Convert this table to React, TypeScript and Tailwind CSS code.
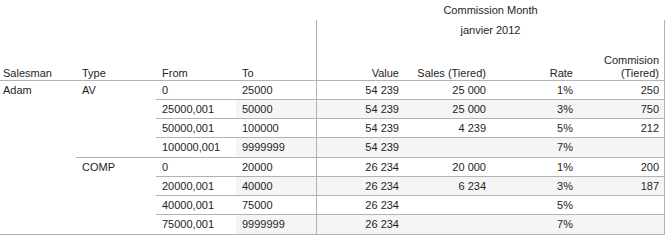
type Row = [string, string, string, string, string, string]

const groups: { type: string; rows: Row[] }[] = [
  {
    type: 'AV',
    rows: [
      ['0', '25000', '54 239', '25 000', '1%', '250'],
      ['25000,001', '50000', '54 239', '25 000', '3%', '750'],
      ['50000,001', '100000', '54 239', '4 239', '5%', '212'],
      ['100000,001', '9999999', '54 239', '', '7%', ''],
    ],
  },
  {
    type: 'COMP',
    rows: [
      ['0', '20000', '26 234', '20 000', '1%', '200'],
      ['20000,001', '40000', '26 234', '6 234', '3%', '187'],
      ['40000,001', '75000', '26 234', '', '5%', ''],
      ['75000,001', '9999999', '26 234', '', '7%', ''],
    ],
  },
]

function DataRow({ row, striped }: { row: Row; striped: boolean }) {
  const [from, to, value, sales, rate, comm] = row
  const bg = striped ? 'bg-[#f5f5f5]' : 'bg-white'
  return (
    <div className="flex h-[19px] leading-[19px]">
      <div className="w-[80px] pl-[6px] bg-white">{from}</div>
      <div className={`w-[80px] pl-[6px] ${bg}`}>{to}</div>
      <div className={`flex border-x border-[#b3b3b3] ${bg}`}>
        <div className="w-[87px] pr-[5px] text-right">{value}</div>
        <div className="w-[87px] pr-[5px] text-right">{sales}</div>
        <div className="w-[87px] pr-[5px] text-right">{rate}</div>
        <div className="w-[86px] pr-[5px] text-right">{comm}</div>
      </div>
    </div>
  )
}

export default function App() {
  return (
    <div
      className="w-[668px] h-[242px] bg-white text-[11px] text-[#1e1e1e] overflow-hidden"
      style={{ fontFamily: '"Liberation Sans", Arial, sans-serif' }}
    >
      <div className="w-[665px]">
        {/* header */}
        <div className="flex h-[81px] border-b border-[#b3b3b3]">
          <div className="w-[316px] flex items-end leading-[13px]">
            <div className="w-[76px] pl-[3px]">Salesman</div>
            <div className="w-[80px] pl-[6px]">Type</div>
            <div className="w-[80px] pl-[6px]">From</div>
            <div className="w-[80px] pl-[6px]">To</div>
          </div>
          <div className="w-[349px] flex flex-col">
            <div className="h-[20px] leading-[21px] text-center">Commission Month</div>
            <div className="flex-1 flex flex-col border-x border-[#b3b3b3]">
              <div className="h-[20px] leading-[21px] text-center">janvier 2012</div>
              <div className="flex-1 flex items-end leading-[13px]">
                <div className="w-[87px] pr-[5px] text-right">Value</div>
                <div className="w-[87px] pr-[5px] text-right">Sales (Tiered)</div>
                <div className="w-[87px] pr-[5px] text-right">Rate</div>
                <div className="w-[86px] pr-[5px] text-right">
                  Commision
                  <br />
                  (Tiered)
                </div>
              </div>
            </div>
          </div>
        </div>

        {/* body */}
        <div className="flex border-b border-[#b3b3b3]">
          <div className="w-[76px] pl-[3px] h-[19px] leading-[19px]">Adam</div>
          <div className="flex flex-col">
            {groups.map((g, gi) => (
              <div
                key={g.type}
                className={`flex ${gi < groups.length - 1 ? 'border-b border-[#b3b3b3]' : ''}`}
              >
                <div className="w-[80px] pl-[6px] h-[19px] leading-[19px]">{g.type}</div>
                <div className="flex flex-col divide-y divide-[#b3b3b3]">
                  {g.rows.map((r, ri) => (
                    <DataRow key={ri} row={r} striped={ri % 2 === 1} />
                  ))}
                </div>
              </div>
            ))}
          </div>
        </div>
      </div>
    </div>
  )
}
